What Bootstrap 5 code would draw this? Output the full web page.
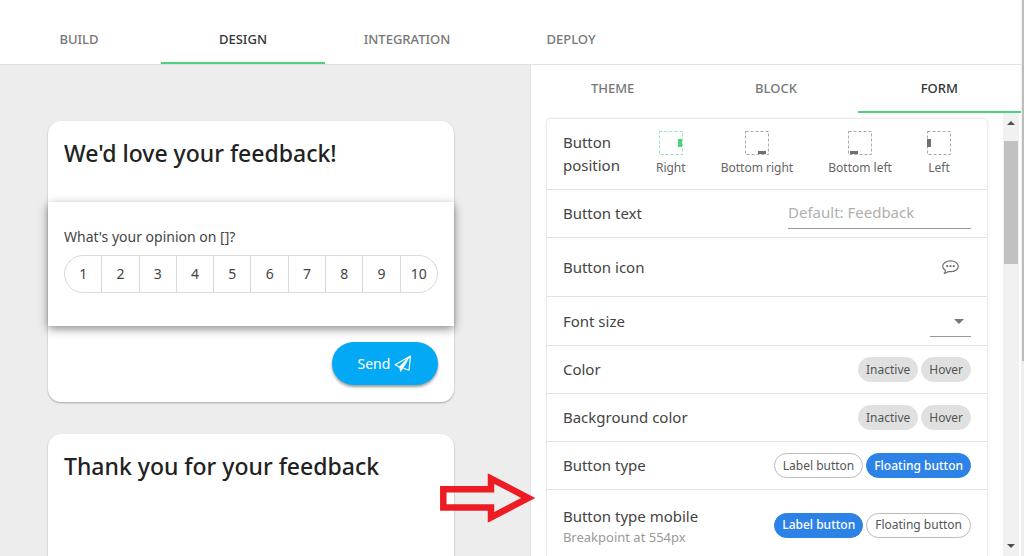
<!DOCTYPE html>
<html lang="en">
<head>
<meta charset="utf-8">
<meta name="viewport" content="width=device-width, initial-scale=1">
<title>Feedback form designer</title>
<link href="https://cdn.jsdelivr.net/npm/bootstrap@5.3.0/dist/css/bootstrap.min.css" rel="stylesheet">
<style>
  body { font-family: "Noto Sans", "Open Sans", sans-serif; color: #444; overflow: hidden; }
  .app-shell { min-width: 0; }

  /* Tab bars */
  .tab-strip .nav-link { height: 48px; padding: 0; font-size: 13px; font-weight: 500; line-height: 20px; color: #777; text-transform: uppercase; border-bottom: 2px solid transparent; }
  .tab-strip .nav-link.active { color: #333; border-bottom-color: #4cd37c; }
  .main-tabs { padding-top: 16px; border-bottom: 1px solid #e2e2e2; }
  .main-tabs .nav { margin-left: -3px; }
  .main-tabs .nav-item { width: 164px; }

  /* Preview */
  .preview-pane { background: #ededed; padding: 56px 76px 0 48px; }
  .preview-card { background: #fff; border-radius: 13px; box-shadow: 0 1px 2px rgba(0,0,0,.3); margin-bottom: 32px; }
  .preview-card h2 { font-size: 23px; line-height: 32px; font-weight: 500; color: #222; margin: 0; padding: 16px; min-height: 81px; }
  .question-block { background: #fff; padding: 24px 16px 33px; box-shadow: 0 3px 9px rgba(0,0,0,.45); font-size: 14px; }
  .question-block p { line-height: 21px; margin: 0 0 8px; color: #444; }
  .scale-group .btn { --bs-btn-padding-x: 0; height: 38px; font-size: 14px; line-height: 20px; color: #444; border: 1px solid #dadada; width: 10%; }
  .scale-group .btn:first-child { border-radius: 19px 0 0 19px; }
  .scale-group .btn:last-child { border-radius: 0 19px 19px 0; }
  .preview-actions { padding: 16px 16px 17px; }
  .send-btn { background: #03a9f4; color: #fff; border: 0; border-radius: 22px; height: 43px; width: 106px; font-size: 14px; box-shadow: 0 2px 3px rgba(0,0,0,.4); }
  .thanks-card { min-height: 240px; }

  /* Settings */
  .settings-pane { width: calc(48% + 1px); border-left: 1px solid #e2e2e2; }
  .settings-body { padding: 6px 16px 0; }
  .settings-card { border-radius: 4px; box-shadow: 0 0 3px rgba(0,0,0,.22); }
  .setting { display: flex; align-items: center; justify-content: space-between; min-height: 48px; padding: 0 16px; border-bottom: 1px solid #e2e2e2; font-size: 15px; line-height: 23px; }
  .row-position { min-height: 71px; }
  .row-icon { min-height: 59px; }
  .row-select { min-height: 49px; }
  .row-mobile { min-height: 71px; }
  .position-label { width: 93px; }
  .position-list { padding-right: 20px; }
  .position-btn { background: none; border: 0; padding: 0; font-size: 12px; line-height: 18px; color: #666; }
  .position-btn svg { display: block; margin: 0 auto 4px; color: #707070; }
  .position-btn.active svg { color: #4cd37c; }
  .line-input { width: 183px; height: 31px; border: 0; border-bottom: 1px solid #999; border-radius: 0; padding: 0 0 2px; font-size: 15px; }
  .line-input::placeholder { color: #b0b0b0; opacity: 1; }
  .line-select { width: 41px; height: 31px; border: 0; border-bottom: 1px solid #999; border-radius: 0; padding: 0; background: no-repeat 24px 13px / 10px 5px url("data:image/svg+xml,%3Csvg xmlns='http://www.w3.org/2000/svg' viewBox='0 0 10 5'%3E%3Cpath fill='%23777' d='M0 0h10L5 5z'/%3E%3C/svg%3E"); }
  .chip-pair { gap: 3px; }
  .chip { height: 25px; padding: 0 7px; border: 1px solid #e0e0e0; border-radius: 13px; background: #e0e0e0; color: #555; font-size: 12px; line-height: 18px; }
  .chip-outline { background: #fff; border-color: #bbb; padding: 0 8px; }
  .chip-blue { background: #2c82e6; border-color: #2c82e6; color: #fff; font-weight: 500; }
  .hint { font-size: 13px; line-height: 18px; color: #999; }

  /* Scrollbars */
  .scroll-track { width: 16px; background: #f1f1f1; margin-right: 2px; color: #505050; }
  .scroll-thumb { width: 14px; height: 123px; background: #c1c1c1; }
  .outer-track { width: 3px; background: #efefef; }
  .outer-thumb { height: 65%; width: 2px; background: #bdbdbd; }

  .callout-arrow { position: absolute; left: 440px; top: 472px; }
</style>
</head>
<body>
<div class="d-flex vh-100">
  <div class="app-shell d-flex flex-column flex-grow-1">
    <header class="main-tabs tab-strip bg-white">
      <ul class="nav">
        <li class="nav-item"><a class="nav-link d-flex align-items-center justify-content-center" href="#">Build</a></li>
        <li class="nav-item"><a class="nav-link active d-flex align-items-center justify-content-center" href="#">Design</a></li>
        <li class="nav-item"><a class="nav-link d-flex align-items-center justify-content-center" href="#">Integration</a></li>
        <li class="nav-item"><a class="nav-link d-flex align-items-center justify-content-center" href="#">Deploy</a></li>
      </ul>
    </header>

    <div class="d-flex flex-grow-1 overflow-hidden">
      <main class="preview-pane flex-grow-1 overflow-hidden">
        <section class="preview-card">
          <h2>We'd love your feedback!</h2>
          <div class="question-block position-relative">
            <p id="q">What's your opinion on []?</p>
            <div class="btn-group scale-group d-flex" role="group" aria-labelledby="q">
              <button type="button" class="btn">1</button>
              <button type="button" class="btn">2</button>
              <button type="button" class="btn">3</button>
              <button type="button" class="btn">4</button>
              <button type="button" class="btn">5</button>
              <button type="button" class="btn">6</button>
              <button type="button" class="btn">7</button>
              <button type="button" class="btn">8</button>
              <button type="button" class="btn">9</button>
              <button type="button" class="btn">10</button>
            </div>
          </div>
          <div class="preview-actions d-flex justify-content-end">
            <button type="button" class="send-btn d-flex align-items-center justify-content-center gap-1">Send
              <svg width="18" height="18" viewBox="0 0 18 18" fill="none" stroke="#fff" stroke-width="1.2" stroke-linejoin="round"><path d="M16.5 1 1.2 9.800 5.600 12.200 16.500 1 15 15.200 9.400 13.200"/><path d="M13.500 5.500 9.200 12.800 6.600 16.600 5.600 12.200z" fill="#fff" stroke-width=".6"/></svg>
            </button>
          </div>
        </section>
        <section class="preview-card thanks-card">
          <h2>Thank you for your feedback</h2>
        </section>
      </main>

      <aside class="settings-pane d-flex flex-column flex-shrink-0 bg-white">
        <nav class="tab-strip">
          <ul class="nav nav-fill">
            <li class="nav-item w-25"><a class="nav-link d-flex align-items-center justify-content-center" href="#">Theme</a></li>
            <li class="nav-item w-25"><a class="nav-link d-flex align-items-center justify-content-center" href="#">Block</a></li>
            <li class="nav-item w-25"><a class="nav-link active d-flex align-items-center justify-content-center" href="#">Form</a></li>
          </ul>
        </nav>
        <div class="d-flex flex-grow-1 overflow-hidden">
          <div class="settings-body flex-grow-1 overflow-hidden">
            <div class="settings-card bg-white">
              <div class="setting row-position">
                <span class="position-label flex-shrink-0">Button position</span>
                <div class="position-list d-flex flex-grow-1 justify-content-between">
                  <button type="button" class="position-btn active"><svg width="24" height="24" viewBox="0 0 24 24"><rect x=".5" y=".5" width="23" height="23" fill="none" stroke="currentColor" stroke-dasharray="3 2" stroke-opacity=".6"/><path d="M19 8h4v8h-4z" fill="currentColor"/></svg>Right</button>
                  <button type="button" class="position-btn"><svg width="24" height="24" viewBox="0 0 24 24"><rect x=".5" y=".5" width="23" height="23" fill="none" stroke="currentColor" stroke-dasharray="3 2" stroke-opacity=".6"/><path d="M13 20h8v3h-8z" fill="currentColor"/></svg>Bottom right</button>
                  <button type="button" class="position-btn"><svg width="24" height="24" viewBox="0 0 24 24"><rect x=".5" y=".5" width="23" height="23" fill="none" stroke="currentColor" stroke-dasharray="3 2" stroke-opacity=".6"/><path d="M2 20h8v3H2z" fill="currentColor"/></svg>Bottom left</button>
                  <button type="button" class="position-btn"><svg width="24" height="24" viewBox="0 0 24 24"><rect x=".5" y=".5" width="23" height="23" fill="none" stroke="currentColor" stroke-dasharray="3 2" stroke-opacity=".6"/><path d="M0 8h4v8H0z" fill="currentColor"/></svg>Left</button>
                </div>
              </div>
              <div class="setting">
                <label for="btnText">Button text</label>
                <input id="btnText" type="text" class="form-control line-input" placeholder="Default: Feedback">
              </div>
              <div class="setting row-icon">
                <span>Button icon</span>
                <button type="button" class="btn p-0 border-0 me-2 pe-1 d-flex" aria-label="Choose icon">
                  <svg width="17" height="15" viewBox="0 0 17 15" fill="none" stroke="#707070" stroke-width="1.2"><path d="M3.4 10.2C1.700 9.200.7 7.900.7 6.300.7 3.200 4.200.8 8.500.8s7.800 2.400 7.800 5.500-3.500 5.400-7.800 5.400c-.8 0-1.500-.1-2.200-.2-1.100 1-2.500 1.700-4.100 2 .7-.8 1.300-1.900 1.200-3.300z" stroke-linejoin="round"/><g fill="#707070" stroke="none"><circle cx="5.200" cy="6.200" r="1.100"/><circle cx="8.500" cy="6.200" r="1.100"/><circle cx="11.800" cy="6.200" r="1.100"/></g></svg>
                </button>
              </div>
              <div class="setting row-select">
                <label for="fontSize">Font size</label>
                <select id="fontSize" class="form-select line-select"><option></option></select>
              </div>
              <div class="setting">
                <span>Color</span>
                <div class="d-flex chip-pair"><button type="button" class="chip">Inactive</button><button type="button" class="chip">Hover</button></div>
              </div>
              <div class="setting">
                <span>Background color</span>
                <div class="d-flex chip-pair"><button type="button" class="chip">Inactive</button><button type="button" class="chip">Hover</button></div>
              </div>
              <div class="setting">
                <span>Button type</span>
                <div class="d-flex chip-pair"><button type="button" class="chip chip-outline">Label button</button><button type="button" class="chip chip-blue">Floating button</button></div>
              </div>
              <div class="setting row-mobile">
                <div>Button type mobile<div class="hint">Breakpoint at 554px</div></div>
                <div class="d-flex chip-pair"><button type="button" class="chip chip-blue">Label button</button><button type="button" class="chip chip-outline">Floating button</button></div>
              </div>
            </div>
          </div>
          <div class="scroll-track d-flex flex-column align-items-center justify-content-between py-2" aria-hidden="true">
            <svg width="8" height="4" viewBox="0 0 8 4"><path d="M0 4h8L4 0z" fill="currentColor"/></svg>
            <div class="scroll-thumb mb-auto mt-3"></div>
            <svg width="8" height="4" viewBox="0 0 8 4"><path d="M0 0h8L4 4z" fill="currentColor"/></svg>
          </div>
        </div>
      </aside>
    </div>
  </div>
  <div class="outer-track d-flex justify-content-end" aria-hidden="true"><div class="outer-thumb"></div></div>
</div>
<svg class="callout-arrow" width="96" height="52" viewBox="0 0 96 52" fill="none" stroke="#ed1c24" stroke-width="6.500" aria-hidden="true"><path d="M3.300 17.300H51V6.500L88.300 26 51 45.300V35.500H3.300z"/></svg>
<script src="https://cdn.jsdelivr.net/npm/bootstrap@5.3.0/dist/js/bootstrap.bundle.min.js"></script>
</body>
</html>
